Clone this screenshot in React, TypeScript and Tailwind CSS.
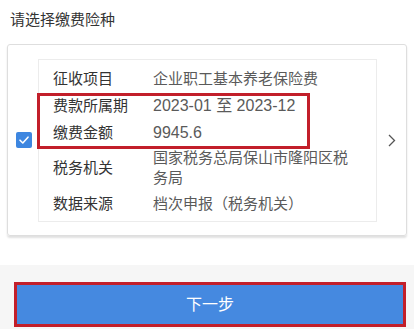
import React from 'react';

function Row({ label, value, tall, num }: { label: string; value: string; tall?: boolean; num?: boolean }) {
  return (
    <div className={`flex items-center ${tall ? 'py-[2px] leading-[20px]' : 'h-[27px] leading-[27px]'}`}>
      <div className="w-[100px] shrink-0 text-[#333]">{label}</div>
      <div className={`w-[200px] text-[#5a5a5a] ${num ? 'text-[16px]' : ''}`}>{value}</div>
    </div>
  );
}

export default function App() {
  return (
    <div
      className="w-[414px] h-[329px] bg-white flex flex-col overflow-hidden"
      style={{ fontFamily: '"Liberation Sans", "Noto Sans CJK SC", sans-serif' }}
    >
      <div className="pt-[10px] pl-[10px] text-[15px] leading-[20px] text-[#333]">请选择缴费险种</div>

      <div className="mx-[7px] mt-[14px] h-[192px] border border-[#dedede] rounded-[3px] shadow-[0_2px_2px_rgba(0,0,0,0.12)] flex items-center">
        <div className="w-[30px] shrink-0 pl-[8px]">
          <div className="w-[16px] h-[16px] rounded-[2px] bg-[#3d86e0] flex items-center justify-center">
            <svg width="12" height="12" viewBox="0 0 12 12" fill="none">
              <path d="M2 6.2 L4.8 9 L10 3.2" stroke="white" strokeWidth="1.6" strokeLinecap="round" strokeLinejoin="round" />
            </svg>
          </div>
        </div>

        <div className="w-[339px] h-[163px] shrink-0 border border-[#ececec] pl-[14px] pt-[5px] text-[15px]">
          <Row label="征收项目" value="企业职工基本养老保险费" />
          <div className="relative">
            <Row label="费款所属期" value="2023-01 至 2023-12" num />
            <Row label="缴费金额" value="9945.6" num />
            <div className="absolute -left-[16px] top-[1px] w-[273px] h-[56px] border-[3px] border-[#c21f2a]" />
          </div>
          <Row label="税务机关" value="国家税务总局保山市隆阳区税务局" tall />
          <Row label="数据来源" value="档次申报（税务机关）" />
        </div>

        <div className="flex-1 flex justify-center">
          <svg width="8" height="13" viewBox="0 0 8 13" fill="none">
            <path d="M1 1 L6.5 6.5 L1 12" stroke="#555" strokeWidth="1.3" />
          </svg>
        </div>
      </div>

      <div className="mt-auto h-[64px] bg-[#f6f6f6] pt-[17px] pr-[8px] pl-[14px]">
        <div className="h-[45px] border-[3px] border-[#c21f2a] bg-[#4589e0] flex items-center justify-center text-white text-[16px]">
          下一步
        </div>
      </div>
    </div>
  );
}
